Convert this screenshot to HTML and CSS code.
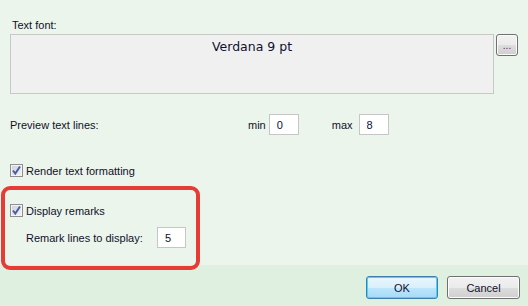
FILE: index.html
```html
<!DOCTYPE html>
<html lang="en">
<head>
    <meta charset="UTF-8">
    <title>Preview settings</title>
    <link rel="stylesheet" href="styles.css">
</head>
<body>

    <!-- Main settings area -->
    <div class="content">
        <div class="label">Text font:</div>
        <div class="font-row">
            <div class="font-box">Verdana 9 pt</div>
            <button type="button" class="btn-small">...</button>
        </div>

        <div class="preview-row">
            <span class="preview-label">Preview text lines:</span>
            <span class="min-label">min</span>
            <input type="text" class="num" value="0">
            <span class="max-label">max</span>
            <input type="text" class="num" value="8">
        </div>

        <label class="check-row render-row">
            <span class="check">
                <svg width="11" height="11" viewBox="0 0 11 11"><path d="M2 5.5 L4.3 8.5 L9 1.5" fill="none" stroke="#4b5fa6" stroke-width="2"/></svg>
            </span>
            Render text formatting
        </label>

        <label class="check-row remarks-row">
            <span class="check">
                <svg width="11" height="11" viewBox="0 0 11 11"><path d="M2 5.5 L4.3 8.5 L9 1.5" fill="none" stroke="#4b5fa6" stroke-width="2"/></svg>
            </span>
            Display remarks
        </label>

        <div class="remark-lines">
            <span class="remark-label">Remark lines to display:</span>
            <input type="text" class="num" value="5">
        </div>
    </div>

    <!-- Footer with buttons -->
    <div class="footer">
        <button type="button" class="btn btn-ok">OK</button>
        <button type="button" class="btn">Cancel</button>
    </div>

    <!-- Highlight annotation -->
    <div class="highlight"></div>

</body>
</html>
```

FILE: styles.css
```css
body {
    margin: 0;
    font-family: "Liberation Sans", Arial, sans-serif;
    font-size: 11px;
    color: #10102a;
    background-color: #ecf5ec;
    width: 528px;
    height: 306px;
    overflow: hidden;
    position: relative;
}

/* Main area */
.content {
    height: 265px;
    padding: 18px 10px 0 10px;
    box-sizing: border-box;
}

.label {
    line-height: 14px;
    margin-left: 2px;
}

.font-row {
    display: flex;
    align-items: flex-start;
    gap: 2px;
    margin-top: 2px;
}

.font-box {
    width: 484px;
    height: 60px;
    box-sizing: border-box;
    border: 1px solid #c8c8c8;
    background-color: #f0f0f0;
    font-family: "DejaVu Sans", Verdana, sans-serif;
    font-size: 12.5px;
    text-align: center;
    padding-top: 4px;
    color: #101030;
}

.btn-small {
    width: 22px;
    height: 22px;
    padding: 0 0 2px 0;
    border: 1px solid #707070;
    border-radius: 3px;
    background: linear-gradient(#f2f2f2 0%, #ebebeb 50%, #dddddd 51%, #cfcfcf 100%);
    font-family: "Liberation Sans", Arial, sans-serif;
    font-size: 10px;
    color: #602060;
    line-height: 22px;
    box-shadow: inset 0 0 0 1px #fbfbfb;
}

/* Preview lines */
.preview-row {
    display: flex;
    align-items: center;
    margin-top: 20px;
    height: 21px;
}

.preview-label {
    width: 238px;
}

.min-label {
    margin-right: 3px;
}

.max-label {
    margin-left: 33px;
    margin-right: 6px;
}

.num {
    width: 30px;
    height: 21px;
    box-sizing: border-box;
    border: 1px solid #c6c6c6;
    background-color: #fff;
    font-family: "Liberation Sans", Arial, sans-serif;
    font-size: 11px;
    color: #10102a;
    padding: 0 0 0 7px;
    margin: 0;
    outline: none;
}

/* Checkboxes */
.check-row {
    display: flex;
    align-items: center;
    gap: 3px;
    height: 13px;
}

.render-row {
    margin-top: 29px;
}

.remarks-row {
    margin-top: 27px;
}

.check {
    width: 13px;
    height: 13px;
    box-sizing: border-box;
    border: 1px solid #8f8f8f;
    background: linear-gradient(135deg, #cbcfd5, #f6f6f6);
    box-shadow: inset 0 0 0 1px #f4f4f4;
    display: flex;
    align-items: center;
    justify-content: center;
}

.remark-lines {
    display: flex;
    align-items: center;
    margin-top: 10px;
    padding-left: 16px;
    height: 21px;
}

.remark-label {
    width: 131px;
}

.remark-lines .num {
    width: 29px;
    padding-left: 7px;
}

/* Footer */
.footer {
    height: 41px;
    background-color: #dfefe0;
    display: flex;
    justify-content: flex-end;
    align-items: flex-start;
    gap: 9px;
    padding: 11px 8px 0 0;
    box-sizing: border-box;
}

.btn {
    width: 73px;
    height: 23px;
    border: 1px solid #707070;
    border-radius: 3px;
    background: linear-gradient(#f2f2f2 0%, #ebebeb 50%, #dddddd 51%, #cfcfcf 100%);
    box-shadow: inset 0 0 0 1px #fcfcfc;
    font-family: "Liberation Sans", Arial, sans-serif;
    font-size: 11px;
    color: #10102a;
    padding: 0;
}

.btn-ok {
    width: 72px;
    border-color: #3c7fb1;
    background: linear-gradient(#eaf6fd 0%, #d9f0fc 50%, #bee6fd 51%, #a7d9f5 100%);
    box-shadow: inset 0 0 0 1px #48d3fa;
}

/* Red annotation frame */
.highlight {
    position: absolute;
    left: 1px;
    top: 186px;
    width: 199px;
    height: 84px;
    box-sizing: border-box;
    border: 4px solid #e53d36;
    border-radius: 9px;
}
```
